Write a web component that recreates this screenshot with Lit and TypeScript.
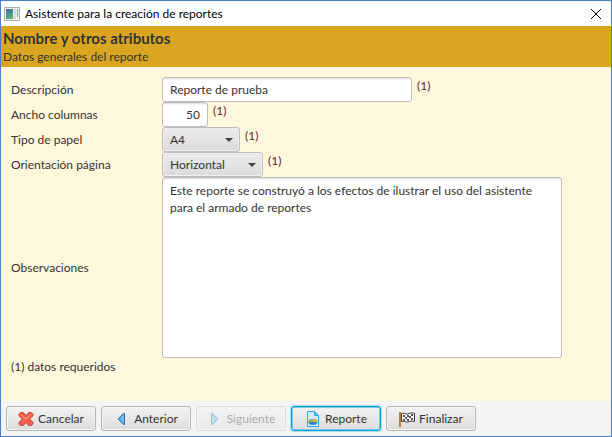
import { LitElement, html, css, svg } from "lit";
import { customElement, property } from "lit/decorators.js";

const icons: Record<string, unknown> = {
  cancel: svg`<path d="M2.5 1.5h2.800L8 4.600l2.700-3.100h2.800l1.500 1.700v1.600L11.700 8l3.300 3.200v1.600l-1.500 1.700h-2.800L8 11.400l-2.700 3.100H2.500L1 12.800v-1.600L4.300 8 1 4.800V3.200z" fill="#f4604c" stroke="#c9483a"/><path d="M3 3.500L8 8l5-4.500" fill="none" stroke="#ff9c88"/>`,
  prev: svg`<path d="M10.500 2.500v11H9.500L4.500 8.500v-1l5-5z" fill="#5db1e6" stroke="#2b6ca8"/><path d="M9 5v6" stroke="#a5d8f5"/>`,
  next: svg`<path d="M4.500 2.500v11h1l5-5v-1l-5-5z" fill="#5db1e6" stroke="#2b6ca8"/><path d="M6 5v6" stroke="#a5d8f5"/>`,
  report: svg`<path d="M2.500.500h7l4 4v11h-11z" fill="#d4f0fe" stroke="#2aa9ea"/><path d="M9.500.500v4h4z" fill="#6cc6f2" stroke="#2aa9ea"/><ellipse cx="8" cy="11" rx="4.500" ry="3" fill="#2f86d0"/><path d="M8 11V8a4.500 3 0 0 1 4.500 3z" fill="#f0b040"/><path d="M3.500 11A4.500 3 0 0 1 8 8v3z" fill="#6fbf73"/>`,
  finish: svg`<path d="M0 1h2v15H0z" fill="#b9842f"/><path d="M2.500 2.500c2-1 4 1 6 .500s4-2 7-.500v8c-3-1-5 0-7 .500s-4-1.500-6-.500z" fill="#fff" stroke="#3a3a3a"/><path d="M4 4h2v2H4zM8 4h2v2H8zM12 3h2v2h-2zM6 6h2v2H6zM10 5h2v2h-2zM4 8h2v2H4zM8 8h2v2H8zM12 7h2v2h-2z" fill="#555"/>`,
};

@customElement("wizard-button")
class WizardButton extends LitElement {
  @property() icon = "";
  @property({ type: Boolean }) disabled = false;
  @property({ type: Boolean }) selected = false;

  static styles = css`
    .button {
      display: flex;
      align-items: center;
      justify-content: center;
      gap: 4px;
      box-sizing: border-box;
      width: 90px;
      height: 25px;
      padding: 0;
      border: 1px solid #b5b5b5;
      border-radius: 3px;
      background: linear-gradient(#f3f3f3, #dcdcdc);
      box-shadow: inset 0 0 0 1px #f4f4f4;
      color: #333;
      font: inherit;
    }
    .button:disabled { opacity: 0.4; }
    .selected {
      border-color: #039ed3;
      box-shadow: 0 0 1px 1px #a5dcef, inset 0 0 0 1px #7cc9e4;
    }
    .icon { flex: none; width: 16px; height: 16px; }
  `;

  render() {
    return html`<button class="button ${this.selected ? "selected" : ""}" type="button" ?disabled=${this.disabled}>
      <svg class="icon" viewBox="0 0 16 16" aria-hidden="true">${icons[this.icon]}</svg><slot></slot>
    </button>`;
  }
}

@customElement("app-root")
class AppRoot extends LitElement {
  static styles = css`
    :host {
      display: flex;
      flex-direction: column;
      box-sizing: border-box;
      min-height: 100vh;
      border: 1px solid #4a7ed0;
      background: #fff7dc;
      color: #333;
      font: 12px/17px Lato, "Open Sans", sans-serif;
    }
    .titlebar {
      display: flex;
      align-items: center;
      gap: 5px;
      height: 25px;
      padding: 0 9px 0 3px;
      background: #fff;
      color: #000;
    }
    .title { flex: 1; }
    .app-icon { width: 16px; height: 14px; }
    .close { display: flex; padding: 0; border: 0; background: none; }
    .close-icon { width: 12px; height: 12px; }
    .header { padding: 2px; background: #daa520; }
    .heading { margin: 0; font-size: 15px; line-height: 20px; }
    .subtitle { margin: 0; }
    .form {
      display: grid;
      grid-template-columns: 151px 1fr;
      align-items: center;
      flex: 1;
      align-content: start;
      padding: 10px;
    }
    .field { display: flex; gap: 5px; }
    .required { color: #5a2338; }
    .input, .select, .notes {
      box-sizing: border-box;
      border: 1px solid #bdbdbd;
      border-radius: 3px;
      outline: 0;
      color: #333;
      font: inherit;
    }
    .input, .select { height: 25px; padding: 0 7px; }
    .input, .notes {
      background: #fff;
      box-shadow: inset 0 2px 2px -1px #ddd;
    }
    .name { width: 250px; }
    .width { width: 46px; text-align: right; }
    .picker { position: relative; }
    .picker::after {
      content: "";
      position: absolute;
      top: 11px;
      right: 7px;
      border: 4px solid transparent;
      border-top-color: #444;
      border-bottom: 0;
      pointer-events: none;
    }
    .select {
      display: block;
      appearance: none;
      background: linear-gradient(#ececec, #dadada);
      box-shadow: inset 0 0 0 1px #f0f0f0;
    }
    .paper { width: 78px; }
    .orientation { width: 101px; }
    .notes {
      display: block;
      width: 100%;
      max-width: 400px;
      height: 181px;
      padding: 4px 7px;
      resize: none;
    }
    .footnote { margin: 0; }
    .actions {
      display: flex;
      gap: 5px;
      padding: 5px;
      background: #f4f4f4;
    }
  `;

  render() {
    return html`
      <header class="titlebar">
        <svg class="app-icon" viewBox="0 0 16 14" aria-hidden="true">
          <defs><linearGradient id="screen" x2="0.3" y2="1"><stop stop-color="#3c6ea5"/><stop offset="1" stop-color="#58b070"/></linearGradient></defs>
          <path d="M.5.5h15v13H.5z" fill="#f4f4f4" stroke="#a9adb2"/>
          <path d="M2 2h7v10H2z" fill="url(#screen)"/>
          <path d="M10 2h2v10h-2z" fill="#c9dce2"/><path d="M13 2h1v8h-1z" fill="#6fae8c"/>
        </svg>
        <span class="title">Asistente para la creación de reportes</span>
        <button class="close" type="button" aria-label="Cerrar">
          <svg class="close-icon" viewBox="0 0 12 12"><path d="M1 1l10 10M11 1L1 11" stroke="#000"/></svg>
        </button>
      </header>
      <section class="header">
        <h1 class="heading">Nombre y otros atributos</h1>
        <p class="subtitle">Datos generales del reporte</p>
      </section>
      <main class="form">
        <label for="name">Descripción</label>
        <div class="field"><input id="name" class="input name" value="Reporte de prueba" /><span class="required">(1)</span></div>
        <label for="width">Ancho columnas</label>
        <div class="field"><input id="width" class="input width" value="50" /><span class="required">(1)</span></div>
        <label for="paper">Tipo de papel</label>
        <div class="field"><div class="picker"><select id="paper" class="select paper"><option>A4</option></select></div><span class="required">(1)</span></div>
        <label for="orientation">Orientación página</label>
        <div class="field"><div class="picker"><select id="orientation" class="select orientation"><option>Horizontal</option></select></div><span class="required">(1)</span></div>
        <label for="notes">Observaciones</label>
        <textarea id="notes" class="notes" .value=${"Este reporte se construyó a los efectos de ilustrar el uso del asistente para el armado de reportes"}></textarea>
        <p class="footnote">(1) datos requeridos</p>
      </main>
      <footer class="actions">
        <wizard-button icon="cancel">Cancelar</wizard-button>
        <wizard-button icon="prev">Anterior</wizard-button>
        <wizard-button icon="next" disabled>Siguiente</wizard-button>
        <wizard-button icon="report" selected>Reporte</wizard-button>
        <wizard-button icon="finish">Finalizar</wizard-button>
      </footer>
    `;
  }
}
